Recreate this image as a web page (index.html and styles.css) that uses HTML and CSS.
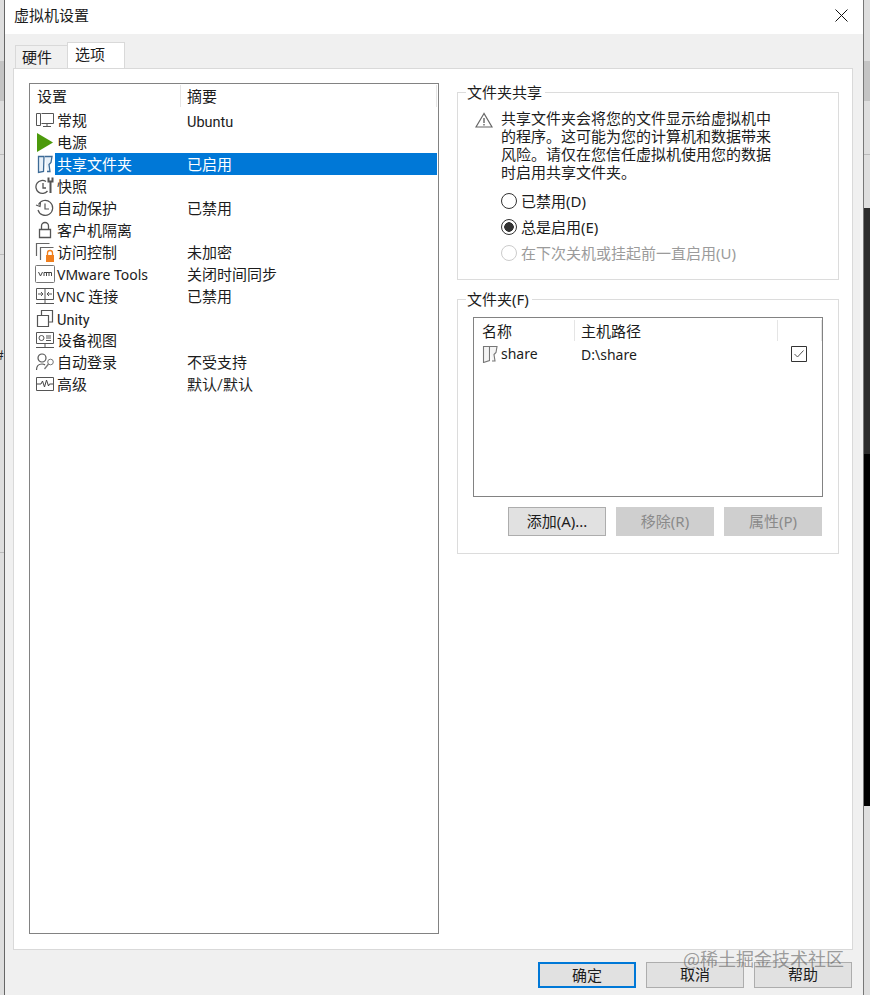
FILE: index.html
```html
<!DOCTYPE html>
<html lang="zh-CN">
<head>
<meta charset="utf-8">
<title>虚拟机设置</title>
<link rel="stylesheet" href="styles.css">
</head>
<body>
<span class="behind">#</span>
<div class="dialog">
  <header class="titlebar">
    <span class="title">虚拟机设置</span>
    <svg class="close" width="13" height="13" viewBox="0 0 13 13"><path d="M.5.500l12 12M12.500.500l-12 12" stroke="#111" fill="none"/></svg>
  </header>
  <main class="body">
    <nav class="tabs">
      <span class="tab">硬件</span>
      <span class="tab tab-active">选项</span>
    </nav>
    <section class="panel">
      <div class="list settings">
        <div class="list-head">
          <span class="col-a">设置</span>
          <span class="col-b">摘要</span>
        </div>
        <div class="row">
          <svg class="ic" viewBox="0 0 20 20"><path d="M1.500 3.500h4v12h-4zM6.500 3.500h12v10h-12M12 14v3M8 16.500h8" fill="none" stroke="#555"/></svg>
          <span class="name">常规</span><span class="sum"><span class="rb">Ubuntu</span></span>
        </div>
        <div class="row">
          <svg class="ic" viewBox="0 0 20 20"><path d="M2 1l16 9.500L2 20z" fill="#4c9a0c"/></svg>
          <span class="name">电源</span>
        </div>
        <div class="row">
          <svg class="ic" viewBox="0 0 20 20"><path d="M3.500 2.500h5.500l-.5 15-5 1zM10 2.500h7l-1 6-2 2 1 7h-3" fill="#e8f0f8" stroke="#3c6a96" stroke-width="1.300"/></svg>
          <span class="name sel">共享文件夹</span><span class="sum sel">已启用</span>
        </div>
        <div class="row">
          <svg class="ic" viewBox="0 0 20 20"><path d="M11 5.500A6.500 6.500 0 1 0 12.500 15M8 7v5h3" fill="none" stroke="#555" stroke-width="1.300"/><path d="M15.500 6v11M13.500 1.500v4h4v-4" fill="none" stroke="#555" stroke-width="2"/></svg>
          <span class="name">快照</span>
        </div>
        <div class="row">
          <svg class="ic" viewBox="0 0 20 20"><path d="M3.500 6.500A7.500 7.500 0 1 1 3 12M10 5.500V11h4M1 7l4 1.500.5-4" fill="none" stroke="#555" stroke-width="1.200"/></svg>
          <span class="name">自动保护</span><span class="sum">已禁用</span>
        </div>
        <div class="row">
          <svg class="ic" viewBox="0 0 20 20"><path d="M4.500 9.500h11v8h-11zM6.500 9V6a3.500 3.500 0 0 1 7 0v3" fill="none" stroke="#555" stroke-width="1.300"/></svg>
          <span class="name">客户机隔离</span>
        </div>
        <div class="row">
          <svg class="ic" viewBox="0 0 20 20"><path d="M1.500 14V1.500h13M5.500 18V5.500h13" fill="none" stroke="#666" stroke-width="1.200"/><path d="M11 13h8v7h-8z" fill="#f07f1e"/><path d="M12.500 13v-2a2.500 2.500 0 0 1 5 0v2" fill="none" stroke="#f07f1e" stroke-width="1.300"/></svg>
          <span class="name">访问控制</span><span class="sum">未加密</span>
        </div>
        <div class="row">
          <svg class="ic" viewBox="0 0 20 20"><rect x=".5" y="1.500" width="19" height="17" rx="1" fill="#fff" stroke="#777"/><path d="M3.500 8l2 4 2-4M9 12V8.500h5V12M11.500 8.500V12M14 8.500h2.500V12" fill="none" stroke="#444"/></svg>
          <span class="name"><span class="lat">VMware Tools</span></span><span class="sum">关闭时间同步</span>
        </div>
        <div class="row">
          <svg class="ic" viewBox="0 0 20 20"><path d="M1.500 2.500h17v11h-17zM10 3v10M10 14v3M1 17.500h18M3 8h5M6 6l2 2-2 2M17 8h-5M14 6l-2 2 2 2" fill="none" stroke="#555"/></svg>
          <span class="name"><span class="lat">VNC</span> 连接</span><span class="sum">已禁用</span>
        </div>
        <div class="row">
          <svg class="ic" viewBox="0 0 20 20"><path d="M2.500 7.500h11v11h-11zM6.500 7V2.500h11V14H14" fill="none" stroke="#555" stroke-width="1.200"/></svg>
          <span class="name"><span class="rb">Unity</span></span>
        </div>
        <div class="row">
          <svg class="ic" viewBox="0 0 20 20"><path d="M1.500 2.500h17v11h-17zM10 14v3M1 17.500h18M11 6h5M11 8h5M11 10.500h5" fill="none" stroke="#555"/><circle cx="6.500" cy="8" r="2.500" fill="none" stroke="#555"/></svg>
          <span class="name">设备视图</span>
        </div>
        <div class="row">
          <svg class="ic" viewBox="0 0 20 20"><circle cx="7" cy="6" r="4" fill="none" stroke="#555" stroke-width="1.200"/><path d="M1.500 18c0-4 2-6 5.500-6 1.500 0 2.500.5 3 1" fill="none" stroke="#555" stroke-width="1.200"/><circle cx="15.500" cy="10" r="2.800" fill="none" stroke="#777"/><path d="M13.500 12l-4 5" stroke="#777" fill="none" stroke-width="1.300"/></svg>
          <span class="name">自动登录</span><span class="sum">不受支持</span>
        </div>
        <div class="row">
          <svg class="ic" viewBox="0 0 20 20"><path d="M1.500 3.500h17v13h-17z" fill="none" stroke="#555"/><path d="M2 10h4l1.500-3 2 6 2-7 2 6 1-2h3.500" fill="none" stroke="#444"/></svg>
          <span class="name">高级</span><span class="sum">默认<span class="slash">/</span>默认</span>
        </div>
      </div>
      <div class="side">
        <fieldset class="group group-share">
          <legend>文件夹共享</legend>
          <div class="warn">
            <svg class="warn-ic" width="18" height="16" viewBox="0 0 18 16"><path d="M9 1.500L1 15h16z" fill="none" stroke="#666" stroke-width="1.200"/><path d="M9 6v5M9 12v1.500" stroke="#666" stroke-width="1.400" fill="none"/></svg>
            <p class="warn-text">共享文件夹会将您的文件显示给虚拟机中<br>的程序。这可能为您的计算机和数据带来<br>风险。请仅在您信任虚拟机使用您的数据<br>时启用共享文件夹。</p>
          </div>
          <div class="radios">
            <div class="radio"><i class="dot"></i>已禁用<span class="latw">(D)</span></div>
            <div class="radio"><i class="dot dot-on"></i>总是启用<span class="latw">(E)</span></div>
            <div class="radio radio-off"><i class="dot"></i>在下次关机或挂起前一直启用<span class="latw">(U)</span></div>
          </div>
        </fieldset>
        <fieldset class="group group-folder">
          <legend>文件夹<span class="latw">(F)</span></legend>
          <div class="list folders">
            <div class="folder-head">
              <span class="fcol-a">名称</span>
              <span class="fcol-b">主机路径</span>
              <span class="fcol-c"></span>
            </div>
            <div class="folder-row">
              <span class="fcol-a fname">
                <svg width="17" height="18" viewBox="0 0 17 18"><path d="M1.500 1.500h6v14l-6 2zM8 1.500h7l-1 6-2 2 1 6.500h-3" fill="#f4f4f4" stroke="#777" stroke-width="1.100"/></svg>
                <span class="lat">share</span>
              </span>
              <span class="fcol-b"><span class="lat">D:\share</span></span>
              <span class="fcheck"><svg width="16" height="16" viewBox="0 0 16 16"><path d="M.5.500h15v15H.500z" fill="#fff" stroke="#333"/><path d="M3.500 8l3 3 6-6.500" fill="none" stroke="#555"/></svg></span>
            </div>
          </div>
          <div class="folder-btns">
            <button class="btn">添加<span class="latw">(A)...</span></button>
            <button class="btn btn-off">移除<span class="latw">(R)</span></button>
            <button class="btn btn-off">属性<span class="latw">(P)</span></button>
          </div>
        </fieldset>
      </div>
    </section>
    <footer class="actions">
      <button class="btn btn-low btn-main">确定</button>
      <button class="btn btn-low">取消</button>
      <button class="btn btn-low">帮助</button>
    </footer>
    <div class="watermark">@稀土掘金技术社区</div>
  </main>
</div>
</body>
</html>
```
FILE: styles.css
```css
* { box-sizing: border-box; }
html, body { margin: 0; height: 100%; }
body {
  position: relative;
  width: 870px;
  height: 995px;
  overflow: hidden;
  background:
    linear-gradient(#2b2b2b, #2b2b2b) right 208px / 7px 246px no-repeat,
    linear-gradient(#000, #000) right 454px / 7px 352px no-repeat,
    linear-gradient(#c4c4c4, #c4c4c4) 0 61px / 100% 40px no-repeat,
    linear-gradient(#666, #666) 0 61px / 100% 1px no-repeat,
    linear-gradient(#bbb, #bbb) 0 154px / 100% 1px no-repeat,
    linear-gradient(#bbb, #bbb) 0 254px / 100% 1px no-repeat,
    linear-gradient(#bbb, #bbb) 0 552px / 100% 1px no-repeat,
    #dedede;
  padding: 0 7px 0 5px;
  font: 15px/22px "Noto Sans CJK SC", "Noto Sans", sans-serif;
  color: #1c1c1c;
}
.behind { position: absolute; left: -4px; top: 343px; font-size: 14px; color: #222; }
.lat { font: 14px/18px "Noto Sans", sans-serif; }
.rb { font: 14.500px/18px Roboto, sans-serif; vertical-align: -1px; }
.slash { font: 14.500px/18px Roboto, sans-serif; }
.latw { font: 15px/18px "Noto Sans", sans-serif; }
.dialog { position: relative; height: 995px; display: flex; flex-direction: column; background: #f0f0f0; box-shadow: -1px 0 0 #666, 1px 0 0 #777; }
.titlebar { height: 34px; flex: none; background: #fff; display: flex; align-items: center; justify-content: space-between; padding: 0 15px 4px 9px; }
.close { display: block; }
.body { flex: 1; position: relative; padding: 9px 10px 0 8px; display: flex; flex-direction: column; min-height: 0; }
.tabs { display: flex; height: 25px; padding-left: 2px; align-items: flex-end; position: relative; z-index: 1; }
.tab { width: 53px; height: 23px; border: 1px solid #d9d9d9; border-bottom: 0; background: #f0f0f0; padding-left: 6px; line-height: 22px; }
.tab-active { width: 58px; height: 26px; background: #fff; margin-left: -1px; padding-left: 7px; line-height: 22px; }
.panel { height: 882px; flex: none; background: #fff; border: 1px solid #d9d9d9; padding: 14px 13px 14px 15px; display: flex; gap: 18px; }
.list { background: #fff; border: 1px solid #828282; }
.settings { width: 410px; height: 851px; flex: none; }
.list-head { height: 25px; display: flex; }
.col-a { width: 151px; padding-left: 7px; border-right: 1px solid #e5e5e5; margin: 1px 0 2px; line-height: 22px; }
.col-b { flex: 1; padding-left: 6px; border-right: 1px solid #e5e5e5; margin: 1px 1px 2px 0; line-height: 22px; }
.row { height: 22px; display: flex; align-items: center; padding-left: 5px; }
.ic { width: 20px; height: 20px; flex: none; }
.name { width: 126px; padding-left: 2px; white-space: nowrap; flex: none; }
.sum { flex: 1; padding-left: 6px; margin-right: 1px; white-space: nowrap; }
.sel { background: #0078d7; color: #fff; }
.side { width: 382px; flex: none; display: flex; flex-direction: column; gap: 10px; }
.group { margin: 0; padding: 0 8px; border: 1px solid #dcdcdc; min-width: 0; }
.group legend { padding: 0 3px 0 1px; line-height: 18px; }
.group-share { height: 197px; padding-top: 5px; }
.group-folder { height: 264px; padding: 9px 15px 0; }
.group-folder legend { margin-left: -7px; }
.warn { display: flex; padding-left: 9px; }
.warn-ic { flex: none; margin: 6px 8px 0 0; }
.warn-text { margin: 0; font-size: 15px; line-height: 18px; padding-top: 3px; }
.radios { margin-top: 7px; padding-left: 35px; }
.radio { height: 26px; display: flex; align-items: center; }
.radio-off { color: #9b9b9b; }
.dot { width: 16px; height: 16px; border: 1px solid #333; border-radius: 50%; margin-right: 4px; background: #fff; flex: none; }
.dot-on { background: radial-gradient(circle, #333 0 4.500px, #fff 5px); }
.radio-off .dot { border-color: #ccc; }
.folders { height: 180px; }
.folder-head { height: 25px; display: flex; }
.folder-head span { margin: 2px 0; }
.fcol-a { width: 101px; flex: none; padding-left: 8px; }
.folder-head .fcol-a, .folder-head .fcol-b { border-right: 1px solid #e5e5e5; }
.fcol-b { width: 203px; flex: none; padding-left: 6px; }
.fcol-c { width: 44px; flex: none; border-right: 1px solid #e5e5e5; }
.folder-row { height: 22px; display: flex; align-items: center; }
.fname { display: flex; align-items: center; gap: 2px; }
.fcheck { display: flex; margin-left: 13px; }
.folder-btns { display: flex; justify-content: flex-end; gap: 10px; margin-top: 10px; padding-right: 1px; }
.btn { width: 98px; height: 29px; border: 1px solid #adadad; background: #e1e1e1; font: inherit; color: #1c1c1c; padding: 0 0 2px; line-height: 24px; }
.btn-off { background: #cfcfcf; color: #8a8a8a; border-color: #cfcfcf; }
.actions { display: flex; justify-content: flex-end; gap: 10px; padding: 12px 1px 0 0; }
.btn-low { height: 26px; line-height: 22px; }
.btn-main { border: 2px solid #0078d7; }
.watermark { position: absolute; right: 19px; bottom: 25px; font-size: 18px; line-height: 24px; color: rgba(100, 100, 100, .62); }
```
